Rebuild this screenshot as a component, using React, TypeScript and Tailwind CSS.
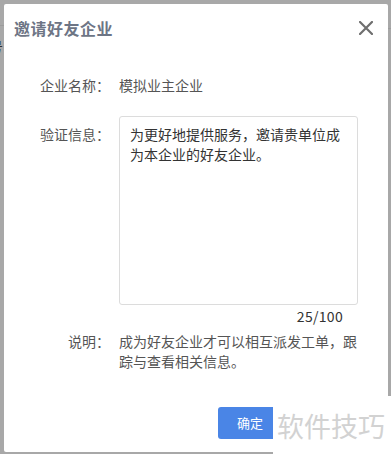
import React from 'react';

const cjk = { fontFamily: '"Noto Sans CJK SC", "Noto Sans", sans-serif' };

function CloseIcon() {
  return (
    <svg width="14" height="14" viewBox="0 0 14 14" fill="none">
      <path d="M1 1L13 13M13 1L1 13" stroke="#6f6f6f" strokeWidth="2.2" strokeLinecap="square" />
    </svg>
  );
}

export default function App() {
  return (
    <div
      className="relative w-[391px] h-[454px] overflow-hidden bg-[#a8a8a8] pt-1 pl-1"
      style={cjk}
    >
      {/* page behind the overlay */}
      <span className="absolute left-[-11px] top-[36px] text-[14px] leading-[20px] text-[#2e2e2e]">号</span>
      <div className="absolute left-0 top-[25px] w-1 h-px bg-[#9c9c9c]" />
      <div className="absolute right-0 top-[28px] w-[3px] h-px bg-[#9c9c9c]" />

      <div className="relative w-[384px] h-[448px] bg-white rounded-[2px]">
        <div className="h-12 flex items-center justify-between pl-[10px] pr-[15px]">
          <h2 className="text-[16px] font-bold text-[#6d7585] tracking-[0.5px]">邀请好友企业</h2>
          <CloseIcon />
        </div>

        <div className="mt-[23px] flex text-[14px] leading-[20px] text-[#555]">
          <span className="w-[106px] text-right">企业名称：</span>
          <span className="ml-[9px]">模拟业主企业</span>
        </div>

        <div className="mt-[21px] flex text-[14px] leading-[20px]">
          <span className="w-[106px] text-right pt-2 text-[#555]">验证信息：</span>
          <div className="ml-[9px] w-[239px]">
            <div className="h-[189px] border border-[#dcdcdc] rounded-[3px] pt-[7px] pl-[10px] pr-[8px] text-[#333]">
              为更好地提供服务，邀请贵单位成为本企业的好友企业。
            </div>
            <div className="mt-px pr-[15px] text-right text-[#333] tracking-[0.3px]">25/100</div>
          </div>
        </div>

        <div className="mt-[5px] flex text-[14px] leading-[20px] text-[#555]">
          <span className="w-[106px] text-right">说明：</span>
          <p className="ml-[9px] w-[240px]">成为好友企业才可以相互派发工单，跟踪与查看相关信息。</p>
        </div>

        <div className="mt-[36px] flex justify-end pr-[106px]">
          <button className="w-[64px] h-8 rounded-[3px] bg-[#4a85e6] text-white text-[13px]">确定</button>
        </div>
      </div>

      {/* watermark */}
      <div className="absolute left-[273px] top-[396px] w-[118px] h-[58px] bg-white flex items-center pl-[4px]">
        <span className="text-[27px] leading-none text-[#d2d2d2] tracking-[0px]">软件技巧</span>
      </div>
    </div>
  );
}
